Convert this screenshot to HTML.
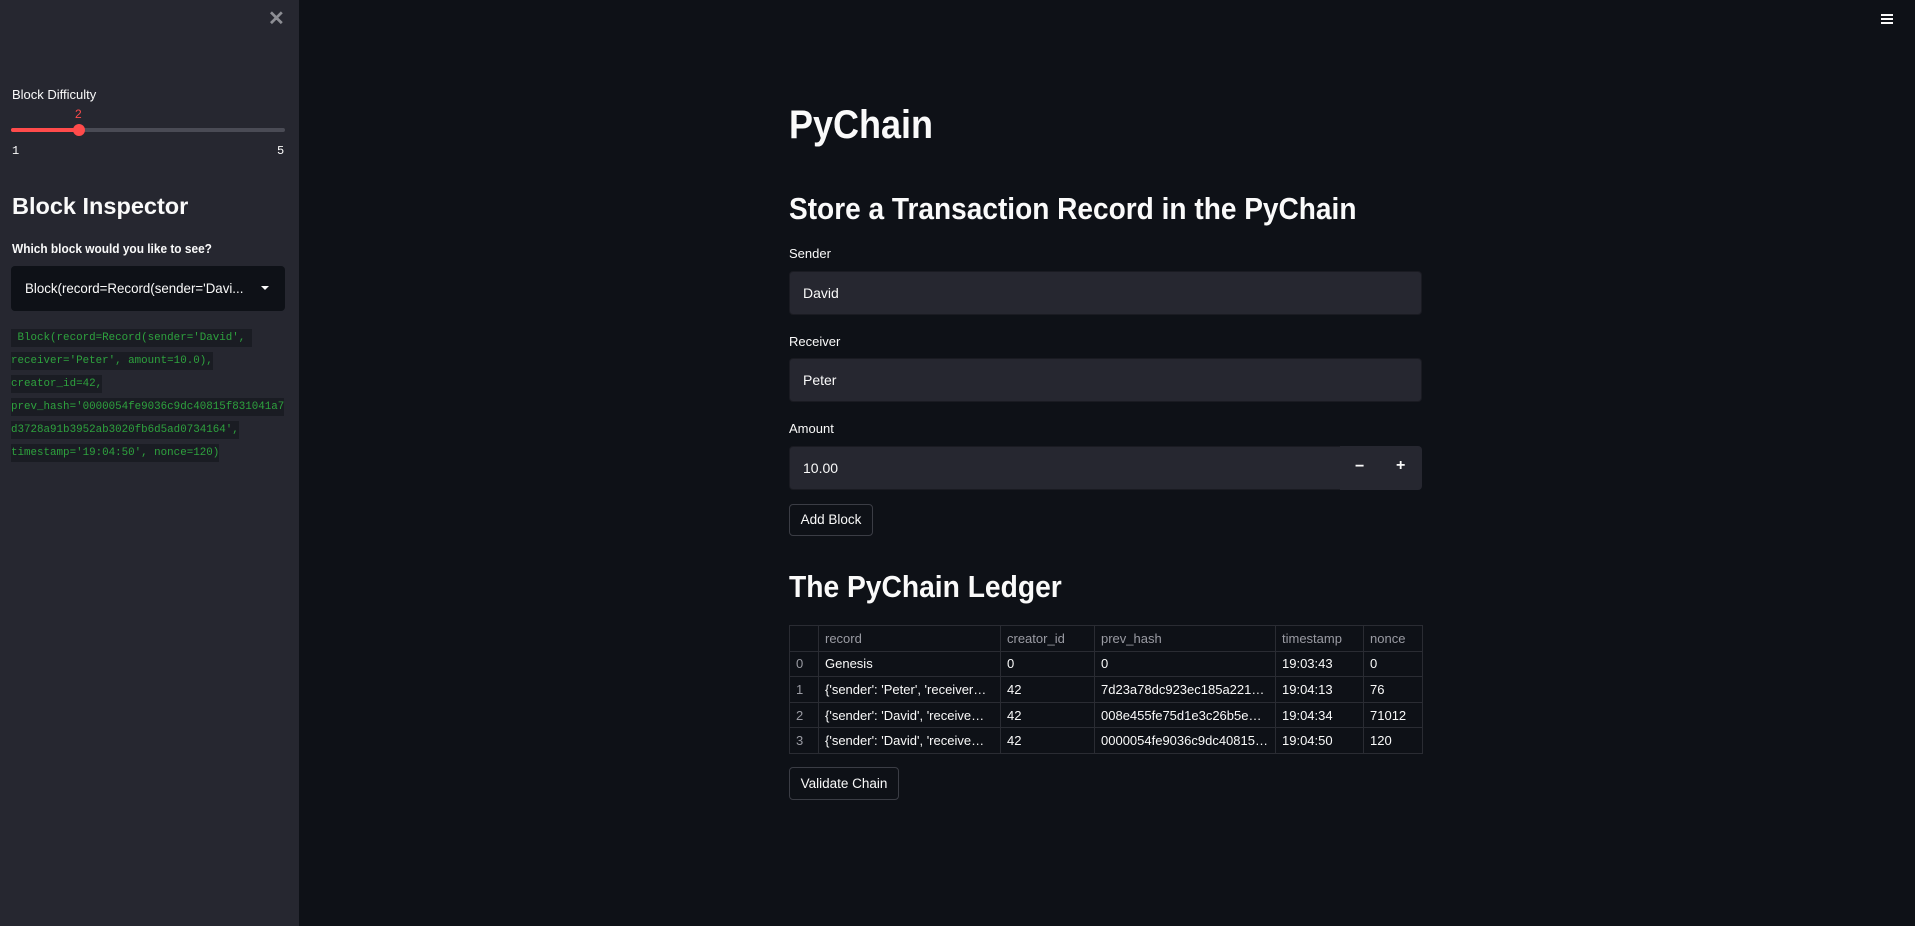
<!DOCTYPE html>
<html><head><meta charset="utf-8"><style>
*{margin:0;padding:0;box-sizing:border-box}
body{width:1915px;height:926px;background:#0e1117;position:relative;overflow:hidden;font-family:"Liberation Sans",sans-serif;color:#fafafa}
.a{position:absolute;white-space:nowrap}
#sb{position:absolute;left:0;top:0;width:299px;height:926px;background:#262730}
.lbl{font-size:13px;color:#fafafa;line-height:16px}
.inp{position:absolute;left:789px;width:633px;height:44px;background:#262730;border:1px solid #1a1b22;border-radius:4px;font-size:14px;line-height:42px;padding-left:13px}
.btn{position:absolute;border:1px solid #3b3d45;border-radius:4px;font-size:13.5px;text-align:center;background:#0e1117}
.code{position:absolute;left:11px;height:18px;background:#1a1c23;color:#2ea23e;font-family:"Liberation Mono",monospace;font-size:10.85px;line-height:18px;white-space:pre}
table{position:absolute;left:789px;top:625px;width:634px;border-collapse:collapse;font-size:13px}
td{border:1px solid #2a2c33;height:25.6px;padding:0 6px;white-space:nowrap}
tr:first-child td{color:#9a9ba3}
td:first-child{color:#9a9ba3}
</style></head><body>
<div id="sb">
<div class="a" style="left:268px;top:6px;font-size:20px;color:#8d8e94;font-weight:bold">✕</div>
<div class="a lbl" style="left:12px;top:87px">Block Difficulty</div>
<div class="a" style="left:75px;top:107px;font-size:12px;color:#ff4b4b">2</div>
<div class="a" style="left:11px;top:128px;width:274px;height:4px;background:#4a4b55;border-radius:2px"></div>
<div class="a" style="left:11px;top:128px;width:68px;height:4px;background:#ff4b4b;border-radius:2px"></div>
<div class="a" style="left:73px;top:124px;width:12px;height:12px;background:#ff4b4b;border-radius:50%"></div>
<div class="a" style="left:12px;top:144px;font-size:12px;font-family:'Liberation Mono',monospace">1</div>
<div class="a" style="left:277px;top:144px;font-size:12px;font-family:'Liberation Mono',monospace">5</div>
<div class="a" style="left:12px;top:193px;font-size:23.5px;font-weight:bold">Block Inspector</div>
<div class="a lbl" style="left:12px;top:241px;font-weight:bold;font-size:12.5px;transform:scaleX(0.95);transform-origin:left">Which block would you like to see?</div>
<div class="a" style="left:11px;top:266px;width:274px;height:45px;background:#0e1117;border-radius:4px"></div>
<div class="a" style="left:25px;top:280px;font-size:14px;transform:scaleX(0.95);transform-origin:left">Block(record=Record(sender='Davi...</div>
<div class="a" style="left:261px;top:286px;width:0;height:0;border-left:4px solid transparent;border-right:4px solid transparent;border-top:4px solid #fafafa"></div>
<div class="code" style="top:329px"> Block(record=Record(sender='David', </div>
<div class="code" style="top:352px">receiver='Peter', amount=10.0),</div>
<div class="code" style="top:375px">creator_id=42,</div>
<div class="code" style="top:398px">prev_hash='0000054fe9036c9dc40815f831041a7</div>
<div class="code" style="top:421px">d3728a91b3952ab3020fb6d5ad0734164',</div>
<div class="code" style="top:444px">timestamp='19:04:50', nonce=120)</div>
</div>
<div class="a" style="left:1881px;top:14px;width:12px;height:2px;background:#fafafa;box-shadow:0 4px 0 #fafafa,0 8px 0 #fafafa"></div>
<div class="a" style="left:789px;top:103px;font-size:40px;font-weight:bold;transform:scaleX(0.9);transform-origin:left">PyChain</div>
<div class="a" style="left:789px;top:191px;font-size:31px;font-weight:bold;transform:scaleX(0.905);transform-origin:left">Store a Transaction Record in the PyChain</div>
<div class="a lbl" style="left:789px;top:246px">Sender</div>
<div class="inp" style="top:271px">David</div>
<div class="a lbl" style="left:789px;top:334px">Receiver</div>
<div class="inp" style="top:358px">Peter</div>
<div class="a lbl" style="left:789px;top:421px">Amount</div>
<div class="inp" style="top:446px">10.00</div>
<div class="a" style="left:1340px;top:446px;width:82px;height:44px;background:#262730;border-radius:0 4px 4px 0"></div>
<div class="a" style="left:1355px;top:458px;font-size:16px;font-weight:bold">−</div>
<div class="a" style="left:1396px;top:457px;font-size:16px;font-weight:bold">+</div>
<div class="btn" style="left:789px;top:504px;width:84px;height:32px;line-height:30px">Add Block</div>
<div class="a" style="left:789px;top:569px;font-size:31px;font-weight:bold;transform:scaleX(0.91);transform-origin:left">The PyChain Ledger</div>
<table>
<tr><td style="width:29px"></td><td style="width:182px">record</td><td style="width:94px">creator_id</td><td style="width:181px">prev_hash</td><td style="width:88px">timestamp</td><td>nonce</td></tr>
<tr><td>0</td><td>Genesis</td><td>0</td><td>0</td><td>19:03:43</td><td>0</td></tr>
<tr><td>1</td><td>{'sender': 'Peter', 'receiver…</td><td>42</td><td>7d23a78dc923ec185a221…</td><td>19:04:13</td><td>76</td></tr>
<tr><td>2</td><td>{'sender': 'David', 'receive…</td><td>42</td><td>008e455fe75d1e3c26b5e…</td><td>19:04:34</td><td>71012</td></tr>
<tr><td>3</td><td>{'sender': 'David', 'receive…</td><td>42</td><td>0000054fe9036c9dc40815…</td><td>19:04:50</td><td>120</td></tr>
</table>
<div class="btn" style="left:789px;top:767px;width:110px;height:33px;line-height:31px">Validate Chain</div>
</body></html>
